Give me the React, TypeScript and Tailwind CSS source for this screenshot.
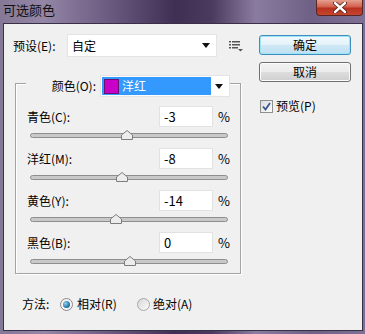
import React from 'react';

const rows = [
  { label: '青色(C):', value: -3 },
  { label: '洋红(M):', value: -8 },
  { label: '黄色(Y):', value: -14 },
  { label: '黑色(B):', value: 0 },
];

const Arrow = () => (
  <svg width="8" height="5" viewBox="0 0 8 5">
    <path d="M0 0 H8 L4 5 Z" fill="#111" />
  </svg>
);

const Thumb = ({ value }: { value: number }) => (
  <svg
    width="12"
    height="10"
    viewBox="0 0 12 10"
    className="absolute -top-[4px]"
    style={{ left: 93 + value * 0.97 }}
  >
    <path d="M6 0.5 L11.5 5 V9.5 H0.5 V5 Z" fill="#ececec" stroke="#7d7d7d" />
  </svg>
);

const SliderRow = ({ label, value }: { label: string; value: number }) => (
  <div className="h-[42px]">
    <div className="flex items-center h-[21px] pl-[11px]">
      <span className="w-[132px]">{label}</span>
      <div className="w-[54px] h-[21px] bg-white border border-[#e2e2e2] pl-[4px] flex items-center text-[13px]">
        {value}
      </div>
      <span className="ml-[5px] text-[13px]">%</span>
    </div>
    <div className="relative ml-[14px] mt-[6px] w-[198px] h-[5px] rounded-full bg-[#c9c9c9] border border-[#8e8e8e]">
      <Thumb value={value} />
    </div>
  </div>
);

export default function App() {
  return (
    <div className="w-[365px] h-[334px] flex flex-col bg-[linear-gradient(90deg,#857896_0%,#9486a6_12%,#6a5a80_30%,#3f2f53_48%,#4a3a5e_58%,#8a7ca0_70%,#6f6086_85%,#7e7194_100%)] font-['Noto_Sans_CJK_SC',sans-serif] text-[12px] text-black leading-[16px]">
      {/* title bar */}
      <div className="relative h-[23px] pl-[3px] pt-[2px]">
        <span className="text-[13px] leading-[16px] text-[#111]">可选颜色</span>
        <div className="absolute right-[2px] top-0 w-[47px] h-[16px] rounded-b-[4px] border border-t-0 border-[#5b2622] bg-[linear-gradient(180deg,#e5a090_0%,#d2604c_45%,#b8301f_55%,#c4472f_100%)] flex items-center justify-center">
          <svg width="14" height="11" viewBox="0 0 14 11">
            <path d="M2 1 L12 10 M12 1 L2 10" stroke="#4a1a16" strokeWidth="4" strokeLinecap="round" />
            <path d="M2 1 L12 10 M12 1 L2 10" stroke="#fff" strokeWidth="2.4" strokeLinecap="round" />
          </svg>
        </div>
      </div>

      {/* client */}
      <div className="ml-[3px] mr-[2px] h-[308px] border border-[#3a2f48] bg-[#f0f0f0] flex pt-[10px]">
        <div className="w-[255px] pl-[9px]">
          {/* preset */}
          <div className="flex items-center h-[23px]">
            <span className="w-[54px]">预设(E):</span>
            <div className="w-[150px] h-[23px] bg-white border border-[#e4e4e4] flex items-center justify-between pl-[4px] pr-[6px]">
              <span>自定</span>
              <Arrow />
            </div>
            <svg width="16" height="13" viewBox="0 0 16 13" className="ml-[11px]">
              <g fill="#555">
                <rect x="1" y="2" width="2" height="1.5" />
                <rect x="4" y="2" width="8" height="1.5" />
                <rect x="1" y="5" width="2" height="1.5" />
                <rect x="4" y="5" width="8" height="1.5" />
                <rect x="1" y="8" width="2" height="1.5" />
                <rect x="4" y="8" width="6" height="1.5" />
                <path d="M10 10 H15 L12.5 12.5 Z" />
              </g>
            </svg>
          </div>

          {/* group */}
          <div className="mt-[26px] ml-[2px] w-[226px] h-[191px] border border-[#a3a3a3] shadow-[inset_1px_1px_0_#fff,1px_1px_0_#fff]">
            <div className="-mt-[9px] ml-[10px] flex items-center h-[22px]">
              <span className="w-[74px] h-[22px] bg-[#f0f0f0] text-right pr-[4px] flex items-center justify-end">
                颜色(O):
              </span>
              <div className="w-[130px] h-[22px] bg-white border border-[#e4e4e4] flex items-center pl-[1px] pr-[6px]">
                <div className="w-[109px] h-[18px] bg-[#3399ff] flex items-center pl-[2px]">
                  <div className="w-[15px] h-[15px] bg-[#c800c8] border border-[#6a1070]" />
                  <span className="ml-[3px] text-white">洋红</span>
                </div>
                <div className="ml-auto">
                  <Arrow />
                </div>
              </div>
            </div>
            <div className="mt-[9px]">
              {rows.map((r) => (
                <SliderRow key={r.label} label={r.label} value={r.value} />
              ))}
            </div>
          </div>

          {/* method */}
          <div className="mt-[22px] ml-[9px] flex items-center h-[16px]">
            <span className="w-[38px]">方法:</span>
            <div className="w-[77px] flex items-center">
              <div className="w-[13px] h-[13px] rounded-full border border-[#8a8a8a] bg-[#f4f4f4] flex items-center justify-center">
                <div className="w-[7px] h-[7px] rounded-full bg-[radial-gradient(circle_at_35%_35%,#8fd0ef,#1f6a9a_70%)]" />
              </div>
              <span className="ml-[4px]">相对(R)</span>
            </div>
            <div className="flex items-center">
              <div className="w-[13px] h-[13px] rounded-full border border-[#a8a8a8] bg-[linear-gradient(135deg,#d8d8d8,#fafafa)]" />
              <span className="ml-[3px]">绝对(A)</span>
            </div>
          </div>
        </div>

        {/* buttons */}
        <div className="w-[92px] flex flex-col">
          <button className="mt-[1px] h-[20px] rounded-[3px] border border-[#3c8fc0] shadow-[inset_0_0_0_1px_#9ee4f7] bg-[linear-gradient(180deg,#f2f9fd_0%,#e3f2fa_50%,#cfe8f5_51%,#bfe0f1_100%)] text-[12px] leading-[16px]">
            确定
          </button>
          <button className="mt-[7px] h-[20px] rounded-[3px] border border-[#707070] shadow-[inset_0_0_0_1px_#fcfcfc] bg-[linear-gradient(180deg,#f2f2f2_0%,#ebebeb_50%,#dddddd_51%,#cfcfcf_100%)] text-[12px] leading-[16px]">
            取消
          </button>
          <div className="mt-[16px] flex items-center ml-[1px]">
            <div className="w-[13px] h-[13px] border border-[#8e8f8f] bg-[linear-gradient(135deg,#dcdcdc,#fdfdfd)] flex items-center justify-center">
              <svg width="9" height="9" viewBox="0 0 9 9">
                <path d="M1 4.5 L3.5 7.5 L8 1" stroke="#39568e" strokeWidth="1.8" fill="none" />
              </svg>
            </div>
            <span className="ml-[3px]">预览(P)</span>
          </div>
        </div>
      </div>
    </div>
  );
}
